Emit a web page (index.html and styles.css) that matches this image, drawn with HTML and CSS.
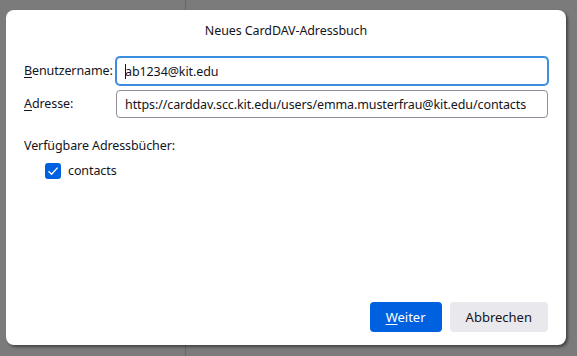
FILE: index.html
```html
<!DOCTYPE html>
<html lang="de">
<head>
  <meta charset="UTF-8">
  <title>Neues CardDAV-Adressbuch</title>
  <link rel="stylesheet" href="styles.css">
</head>
<body>
  <div class="dialog">
    <div class="title">Neues CardDAV-Adressbuch</div>

    <div class="fields">
      <label class="field-label" for="username"><u>B</u>enutzername:</label>
      <div class="input-wrap">
        <input class="text-input focused" id="username" type="text" value="ab1234@kit.edu">
        <span class="caret"></span>
      </div>

      <label class="field-label" for="location"><u>A</u>dresse:</label>
      <div class="input-wrap">
        <input class="text-input" id="location" type="text" value="https://carddav.scc.kit.edu/users/emma.musterfrau@kit.edu/contacts">
      </div>
    </div>

    <div class="section-label">Verfügbare Adressbücher:</div>
    <div class="book-list">
      <label class="check-row">
        <span class="checkbox">
          <svg width="12" height="12" viewBox="0 0 12 12"><path d="M1.5 6.2 L4.6 9.3 L10.6 2.6" fill="none" stroke="#fff" stroke-width="1.3"/></svg>
        </span>
        contacts
      </label>
    </div>

    <div class="buttons">
      <button class="btn primary"><u>W</u>eiter</button>
      <button class="btn">Abbrechen</button>
    </div>
  </div>
</body>
</html>
```

FILE: styles.css
```css
* {
  box-sizing: border-box;
  margin: 0;
  padding: 0;
}

html, body {
  overflow: hidden;
}

body {
  width: 577px;
  height: 356px;
  background: linear-gradient(to right, transparent 185px, #676767 185px, #676767 186px, transparent 186px), #7b7b7b;
  font-family: "Noto Sans", "Open Sans", sans-serif;
  font-size: 12.5px;
  letter-spacing: -0.1px;
  color: #15141a;
  padding: 10px 0 0 6px;
}

.dialog {
  width: 560px;
  height: 335px;
  background-color: #fff;
  border-radius: 8px;
  box-shadow: 2px 2px 3px rgba(0,0,0,0.45);
  padding: 12px 18px 13px 18px;
  display: flex;
  flex-direction: column;
}

.title {
  text-align: center;
  line-height: 18px;
  margin-bottom: 17px;
}

.fields {
  display: grid;
  grid-template-columns: 92px 1fr;
  row-gap: 5px;
  align-items: center;
}

.field-label {
  line-height: 18px;
  white-space: nowrap;
}

.field-label u,
.btn u {
  text-decoration-thickness: 1px;
  text-underline-offset: 2px;
}

.input-wrap {
  position: relative;
}

.text-input {
  display: block;
  width: 100%;
  height: 28px;
  border: 1px solid #8f8f9d;
  border-radius: 4px;
  padding: 0 8px;
  font-family: inherit;
  font-size: 12.5px;
  letter-spacing: -0.1px;
  color: #15141a;
  background: #fff;
  outline: none;
}

.text-input.focused {
  border: 1px solid #3b8de0;
  box-shadow: 0 0 0 1px #3b8de0;
}

.caret {
  position: absolute;
  left: 9px;
  top: 7px;
  width: 1px;
  height: 15px;
  background: #15141a;
}

.section-label {
  margin-top: 19px;
  line-height: 18px;
}

.book-list {
  margin-top: 7px;
  padding-left: 21px;
}

.check-row {
  display: flex;
  align-items: center;
  gap: 7px;
  line-height: 18px;
}

.checkbox {
  width: 16px;
  height: 16px;
  border-radius: 3px;
  background-color: #0061e0;
  display: flex;
  align-items: center;
  justify-content: center;
}

.buttons {
  margin-top: auto;
  display: flex;
  justify-content: flex-end;
  gap: 8px;
}

.btn {
  height: 30px;
  border: none;
  border-radius: 4px;
  background-color: #e9e9ed;
  color: #15141a;
  font-family: inherit;
  font-size: 13px;
  padding: 0 16px;
  min-width: 72px;
}

.btn.primary {
  background-color: #0061e0;
  color: #fff;
}
```
